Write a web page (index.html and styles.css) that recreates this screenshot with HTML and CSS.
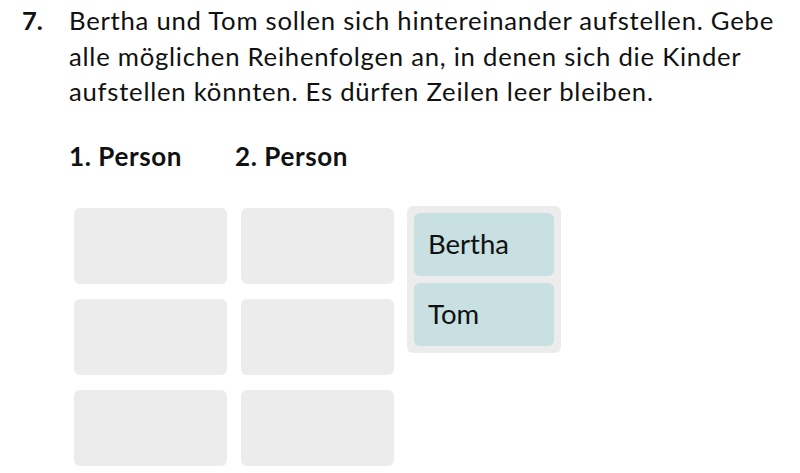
FILE: index.html
```html
<!DOCTYPE html>
<html lang="de">
<head>
<meta charset="utf-8">
<title>Aufgabe 7</title>
<link rel="stylesheet" href="styles.css">
</head>
<body>
<div class="task">
  <div class="task-head">
    <span class="task-num">7.</span>
    <p class="task-text">Bertha und Tom sollen sich hintereinander aufstellen. Gebe alle möglichen Reihenfolgen an, in denen sich die Kinder aufstellen könnten. Es dürfen Zeilen leer bleiben.</p>
  </div>
  <div class="col-heads">
    <span class="col-head">1. Person</span>
    <span class="col-head">2. Person</span>
  </div>
  <div class="board">
    <div class="slots">
      <div class="slot"></div><div class="slot"></div>
      <div class="slot"></div><div class="slot"></div>
      <div class="slot"></div><div class="slot"></div>
    </div>
    <div class="pool">
      <div class="chip">Bertha</div>
      <div class="chip">Tom</div>
    </div>
  </div>
</div>
</body>
</html>
```
FILE: styles.css
```css
html, body {
  margin: 0;
  padding: 0;
  background: #ffffff;
}
body {
  font-family: "Lato", "Noto Sans", sans-serif;
  color: #111111;
}
.task {
  padding: 3px 0 0 0;
}
.task-head {
  display: flex;
  align-items: flex-start;
}
.task-num {
  width: 47px;
  padding-left: 22px;
  flex: none;
  font-size: 25.5px;
  line-height: 35.5px;
  font-weight: 700;
}
.task-text {
  margin: 0;
  width: 718px;
  font-size: 25.7px;
  line-height: 35.5px;
  letter-spacing: 0.75px;
}
.col-heads {
  display: grid;
  grid-template-columns: 166px 166px;
  padding-left: 69px;
  margin-top: 28px;
}
.col-head {
  font-size: 26px;
  line-height: 36px;
  font-weight: 700;
  letter-spacing: 0.6px;
  white-space: nowrap;
}
.board {
  display: flex;
  align-items: flex-start;
  gap: 13px;
  margin-top: 32px;
  padding-left: 74px;
}
.slots {
  display: grid;
  grid-template-columns: 153px 153px;
  grid-auto-rows: 76px;
  column-gap: 14px;
  row-gap: 15px;
  margin-top: 2px;
}
.slot {
  background: #ececec;
  border-radius: 6px;
}
.pool {
  background: #ececec;
  border-radius: 6px;
  padding: 7px;
  display: flex;
  flex-direction: column;
  gap: 7px;
}
.chip {
  width: 140px;
  height: 63px;
  box-sizing: border-box;
  background: #c8e0e1;
  border-radius: 6px;
  padding-left: 14px;
  display: flex;
  align-items: center;
  font-size: 27.5px;
  padding-bottom: 2px;
}
```
